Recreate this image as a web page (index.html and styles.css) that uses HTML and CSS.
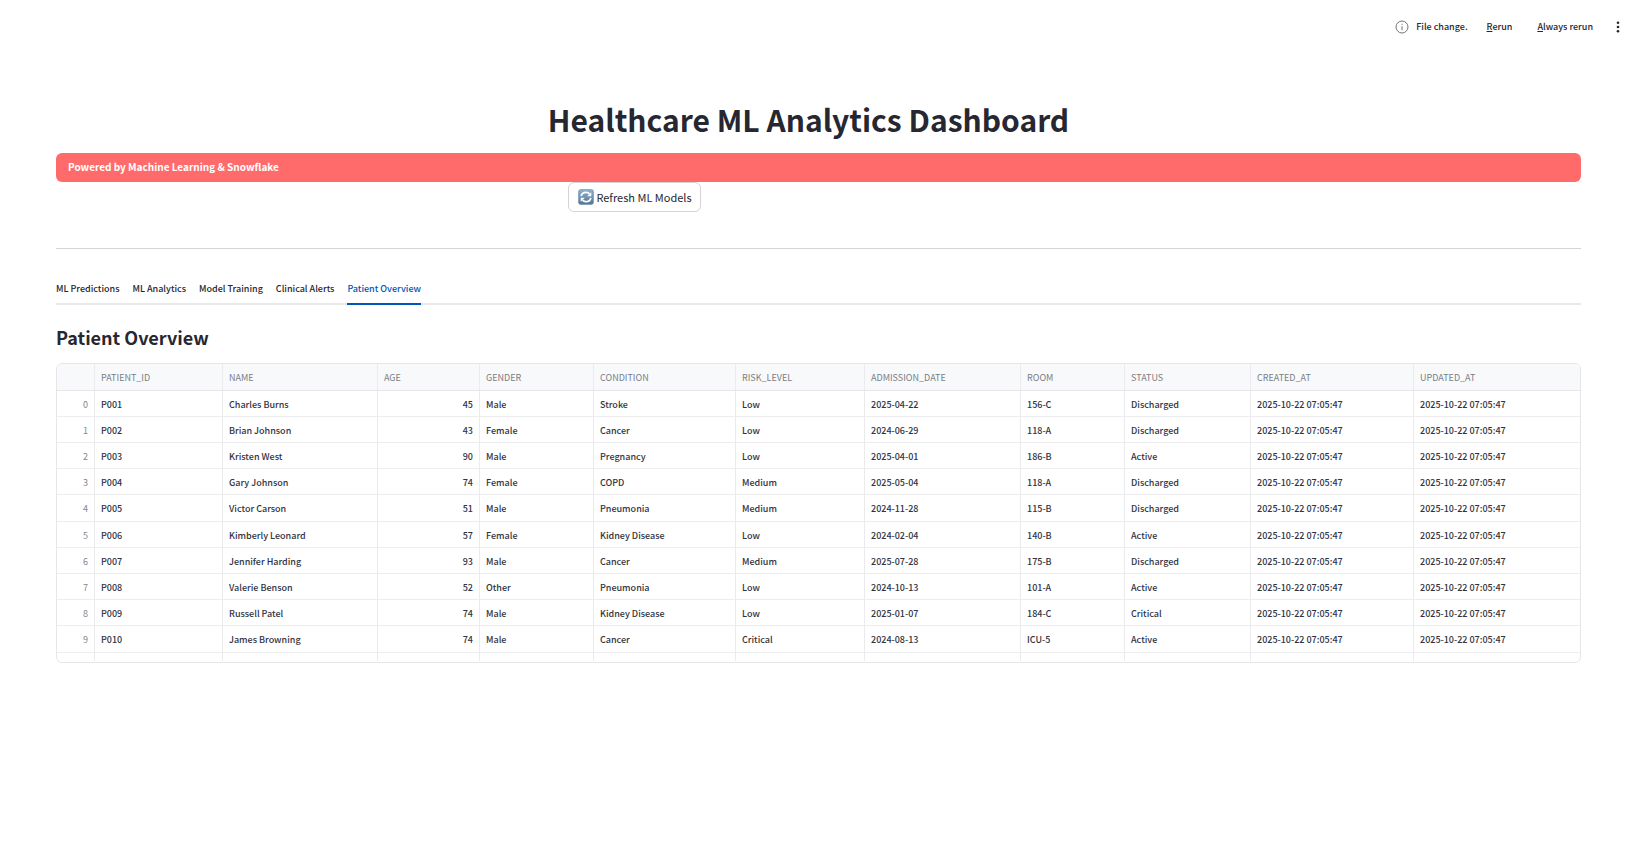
FILE: index.html
```html
<!DOCTYPE html>
<html lang="en">
<head>
<meta charset="utf-8">
<title>Healthcare ML Analytics Dashboard</title>
<link rel="stylesheet" href="styles.css">
</head>
<body>
<header class="toolbar">
  <div class="status">
    <svg class="info-icon" viewBox="0 0 14 14" aria-hidden="true"><circle cx="7" cy="7" r="6"/><path d="M7 6.2v4M7 3.8v1.1"/></svg>
    <span>File change.</span>
  </div>
  <button class="tool rerun" type="button"><u>R</u>erun</button>
  <button class="tool always" type="button"><u>A</u>lways rerun</button>
  <button class="tool menu" type="button" aria-label="Main menu">
    <svg class="kebab" viewBox="0 0 4 12" aria-hidden="true"><circle cx="2" cy="1.7" r="1.3"/><circle cx="2" cy="6" r="1.3"/><circle cx="2" cy="10.3" r="1.3"/></svg>
  </button>
</header>
<main class="page">
  <h1 class="title">Healthcare ML Analytics Dashboard</h1>
  <p class="banner">Powered by Machine Learning &amp; Snowflake</p>
  <div class="actions">
    <button class="refresh" type="button">
      <svg class="refresh-icon" viewBox="0 0 16 16" aria-hidden="true">
        <defs><linearGradient id="tile" x1="0" y1="0" x2="0" y2="1"><stop offset="0" stop-color="#8fb3cf"/><stop offset="1" stop-color="#547594"/></linearGradient></defs>
        <rect x=".5" y=".5" width="15" height="15" rx="2.2" fill="url(#tile)" stroke="#6d8eac" stroke-width=".6"/>
        <path d="M3.200 7.200C3.600 4.800 5.600 3.400 8 3.400c1.500 0 2.700.6 3.500 1.500M12.800 8.800c-.4 2.400-2.400 3.800-4.800 3.800-1.500 0-2.700-.6-3.500-1.500" fill="none" stroke="#fff" stroke-width="1.7"/>
        <path d="M13.300 3.200v4.100H9.200zM2.700 12.800V8.700h4.100z" fill="#fff"/>
      </svg>
      <span>Refresh ML Models</span>
    </button>
  </div>
  <hr class="divider">
  <nav class="tabs" role="tablist">
    <button class="tab" type="button" role="tab">ML Predictions</button>
    <button class="tab" type="button" role="tab">ML Analytics</button>
    <button class="tab" type="button" role="tab">Model Training</button>
    <button class="tab" type="button" role="tab">Clinical Alerts</button>
    <button class="tab active" type="button" role="tab" aria-selected="true">Patient Overview</button>
  </nav>
  <h2 class="section-title">Patient Overview</h2>
  <div class="frame">
    <table class="grid">
      <colgroup><col class="c-index"><col class="c-id"><col class="c-name"><col class="c-age"><col class="c-gender"><col class="c-condition"><col class="c-risk"><col class="c-admission"><col class="c-room"><col class="c-status"><col class="c-created"><col class="c-updated"></colgroup>
      <thead>
        <tr><th></th><th>PATIENT_ID</th><th>NAME</th><th>AGE</th><th>GENDER</th><th>CONDITION</th><th>RISK_LEVEL</th><th>ADMISSION_DATE</th><th>ROOM</th><th>STATUS</th><th>CREATED_AT</th><th>UPDATED_AT</th></tr>
      </thead>
      <tbody>
        <tr><td class="index">0</td><td>P001</td><td>Charles Burns</td><td class="num">45</td><td>Male</td><td>Stroke</td><td>Low</td><td>2025-04-22</td><td>156-C</td><td>Discharged</td><td>2025-10-22 07:05:47</td><td>2025-10-22 07:05:47</td></tr>
        <tr><td class="index">1</td><td>P002</td><td>Brian Johnson</td><td class="num">43</td><td>Female</td><td>Cancer</td><td>Low</td><td>2024-06-29</td><td>118-A</td><td>Discharged</td><td>2025-10-22 07:05:47</td><td>2025-10-22 07:05:47</td></tr>
        <tr><td class="index">2</td><td>P003</td><td>Kristen West</td><td class="num">90</td><td>Male</td><td>Pregnancy</td><td>Low</td><td>2025-04-01</td><td>186-B</td><td>Active</td><td>2025-10-22 07:05:47</td><td>2025-10-22 07:05:47</td></tr>
        <tr><td class="index">3</td><td>P004</td><td>Gary Johnson</td><td class="num">74</td><td>Female</td><td>COPD</td><td>Medium</td><td>2025-05-04</td><td>118-A</td><td>Discharged</td><td>2025-10-22 07:05:47</td><td>2025-10-22 07:05:47</td></tr>
        <tr><td class="index">4</td><td>P005</td><td>Victor Carson</td><td class="num">51</td><td>Male</td><td>Pneumonia</td><td>Medium</td><td>2024-11-28</td><td>115-B</td><td>Discharged</td><td>2025-10-22 07:05:47</td><td>2025-10-22 07:05:47</td></tr>
        <tr><td class="index">5</td><td>P006</td><td>Kimberly Leonard</td><td class="num">57</td><td>Female</td><td>Kidney Disease</td><td>Low</td><td>2024-02-04</td><td>140-B</td><td>Active</td><td>2025-10-22 07:05:47</td><td>2025-10-22 07:05:47</td></tr>
        <tr><td class="index">6</td><td>P007</td><td>Jennifer Harding</td><td class="num">93</td><td>Male</td><td>Cancer</td><td>Medium</td><td>2025-07-28</td><td>175-B</td><td>Discharged</td><td>2025-10-22 07:05:47</td><td>2025-10-22 07:05:47</td></tr>
        <tr><td class="index">7</td><td>P008</td><td>Valerie Benson</td><td class="num">52</td><td>Other</td><td>Pneumonia</td><td>Low</td><td>2024-10-13</td><td>101-A</td><td>Active</td><td>2025-10-22 07:05:47</td><td>2025-10-22 07:05:47</td></tr>
        <tr><td class="index">8</td><td>P009</td><td>Russell Patel</td><td class="num">74</td><td>Male</td><td>Kidney Disease</td><td>Low</td><td>2025-01-07</td><td>184-C</td><td>Critical</td><td>2025-10-22 07:05:47</td><td>2025-10-22 07:05:47</td></tr>
        <tr><td class="index">9</td><td>P010</td><td>James Browning</td><td class="num">74</td><td>Male</td><td>Cancer</td><td>Critical</td><td>2024-08-13</td><td>ICU-5</td><td>Active</td><td>2025-10-22 07:05:47</td><td>2025-10-22 07:05:47</td></tr>
        <tr class="partial"><td></td><td></td><td></td><td></td><td></td><td></td><td></td><td></td><td></td><td></td><td></td><td></td></tr>
      </tbody>
    </table>
  </div>
</main>
</body>
</html>
```
FILE: styles.css
```css
* { box-sizing: border-box; }

body {
  margin: 0;
  background: #fff;
  color: #262730;
  font-family: "Noto Sans CJK SC", "Open Sans", sans-serif;
  font-size: 9px;
  font-weight: 500;
  line-height: 16px;
}

button {
  margin: 0;
  padding: 0;
  border: 0;
  background: none;
  color: inherit;
  font: inherit;
  cursor: pointer;
}

.toolbar {
  display: flex;
  align-items: center;
  justify-content: flex-end;
  height: 53px;
  padding-right: 19px;
}

.status { display: flex; align-items: center; gap: 7px; margin-right: 19px; }
.info-icon { width: 14px; height: 14px; fill: none; stroke: #73747b; stroke-width: 1; }
.rerun { margin-right: 25px; }
.always { margin-right: 23px; }
.menu { display: flex; }
.kebab { width: 4px; height: 12px; fill: #262730; }

.page { padding: 42px 58px 48px 56px; }

.title {
  margin: 0;
  padding-right: 20px;
  font-size: 30px;
  font-weight: 700;
  line-height: 48px;
  text-align: center;
}

.banner {
  margin: 10px 0 0;
  padding: 6px 12px 7px;
  border-radius: 6px;
  background: #ff6b6b;
  color: #fff;
  font-size: 10px;
  font-weight: 700;
}

.actions { padding-left: 33.600%; }

.refresh {
  display: flex;
  align-items: center;
  gap: 2px;
  height: 30px;
  padding: 0 8px 0 9px;
  border: 1px solid #d4d4d7;
  border-radius: 6px;
  background: #fff;
  font-size: 11px;
  font-weight: 400;
}

.refresh-icon { width: 16px; height: 16px; }

.divider {
  height: 1px;
  margin: 36px 0 0;
  border: 0;
  background: #d4d4d7;
}

.tabs {
  display: flex;
  gap: 13px;
  margin-top: 26px;
  box-shadow: inset 0 -2px #e9e9eb;
}

.tab { height: 30px; border-bottom: 2px solid transparent; }
.tab.active { border-color: #0055b8; color: #0055b8; }

.section-title {
  margin: 17px 0 10px;
  font-size: 18px;
  font-weight: 700;
  line-height: 31px;
}

.frame {
  padding-bottom: 1px;
  overflow: hidden;
  border: 1px solid #e6e6e8;
  border-radius: 6px;
}

.grid {
  width: 100%;
  table-layout: fixed;
  border-collapse: separate;
  border-spacing: 0;
  color: #31333f;
}

.grid th, .grid td {
  height: 26px;
  padding: 2px 6px 0;
  overflow: hidden;
  border-right: 1px solid #ebebed;
  border-bottom: 1px solid #ededef;
  text-align: left;
  white-space: nowrap;
}

.grid th {
  height: 27px;
  border-bottom-color: #e6e6e8;
  background: #f8f9fb;
  color: #7c7d84;
  font-weight: 400;
}

.grid th:last-child, .grid td:last-child { border-right: 0; }
.grid tr:nth-child(5n) td { height: 27px; }
.grid .partial td { height: 8px; border-bottom: 0; }
.grid .index { color: #85868d; font-weight: 400; text-align: right; }
.grid .num { text-align: right; }

.c-index { width: 38px; }
.c-id { width: 128px; }
.c-name { width: 155px; }
.c-age { width: 102px; }
.c-gender { width: 114px; }
.c-condition { width: 142px; }
.c-risk { width: 129px; }
.c-admission { width: 156px; }
.c-room { width: 104px; }
.c-status { width: 126px; }
.c-created { width: 163px; }
```
